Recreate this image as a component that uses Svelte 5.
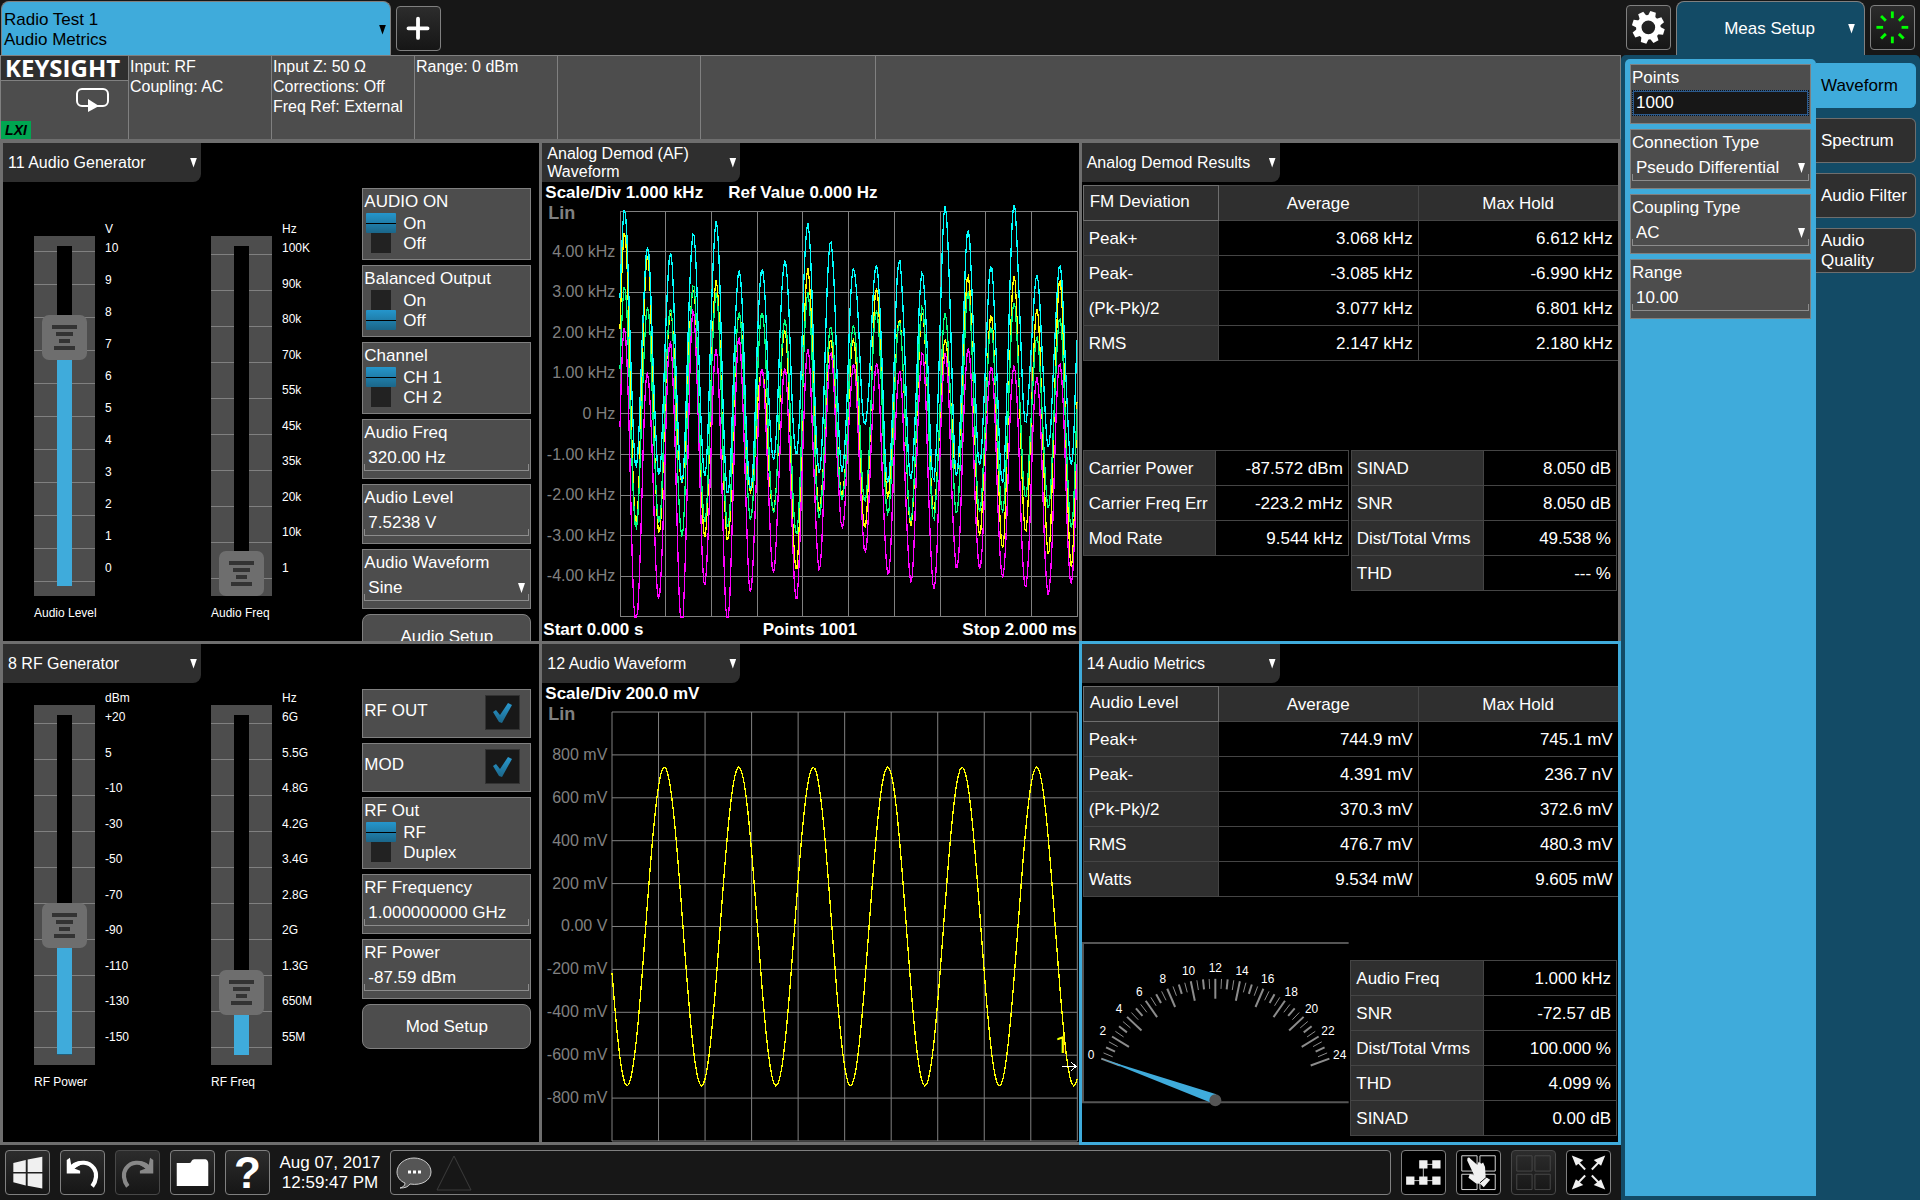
<script lang="ts">
  type Pair = [string, string];

  let audioLevel = $state(75);
  let audioFreq = $state(0);
  let rfPower = $state(37);
  let rfFreq = $state(16);

  const demodRows = [
    ["Peak+", "3.068 kHz", "6.612 kHz"],
    ["Peak-", "-3.085 kHz", "-6.990 kHz"],
    ["(Pk-Pk)/2", "3.077 kHz", "6.801 kHz"],
    ["RMS", "2.147 kHz", "2.180 kHz"],
  ];
  const carrier: Pair[] = [
    ["Carrier Power", "-87.572 dBm"],
    ["Carrier Freq Err", "-223.2 mHz"],
    ["Mod Rate", "9.544 kHz"],
  ];
  const demodQuality: Pair[] = [
    ["SINAD", "8.050 dB"],
    ["SNR", "8.050 dB"],
    ["Dist/Total Vrms", "49.538 %"],
    ["THD", "--- %"],
  ];
  const audioRows = [
    ["Peak+", "744.9 mV", "745.1 mV"],
    ["Peak-", "4.391 mV", "236.7 nV"],
    ["(Pk-Pk)/2", "370.3 mV", "372.6 mV"],
    ["RMS", "476.7 mV", "480.3 mV"],
    ["Watts", "9.534 mW", "9.605 mW"],
  ];
  const audioQuality: Pair[] = [
    ["Audio Freq", "1.000 kHz"],
    ["SNR", "-72.57 dB"],
    ["Dist/Total Vrms", "100.000 %"],
    ["THD", "4.099 %"],
    ["SINAD", "0.00 dB"],
  ];

  const demodScale = ["4.00 kHz", "3.00 kHz", "2.00 kHz", "1.00 kHz", "0 Hz", "-1.00 kHz", "-2.00 kHz", "-3.00 kHz", "-4.00 kHz"];
  const audioScale = ["800 mV", "600 mV", "400 mV", "200 mV", "0.00 V", "-200 mV", "-400 mV", "-600 mV", "-800 mV"];

  // Peak and trough of every cycle, in kHz
  const demodTraces = [
    {
      color: "#ffff00",
      high: [4.47, 3.9, 2.5, 3.1, 3.3, 2.52, 1.1, 2.09, 3.6, 1.84, 1.84, 3.1, 2.32, 2.5, 1.82, 3.4, 2.44, 3.4, 2.59, 3.3],
      low: [-2.7, -2.95, -1.7, -3.05, -3.15, -1.94, -2.4, -3.87, -2.4, -2.0, -2.82, -2.06, -2.75, -2.35, -1.5, -3.0, -3.3, -2.9, -3.45, -3.77],
    },
    {
      color: "#ff00ff",
      high: [2.15, 1.02, 1.8, 2.56, 1.6, 1.9, 1.12, 1.13, 1.6, 1.5, 1.22, 1.25, 1.06, 1.53, 1.5, 1.64, 1.2, 1.21, 0.91, 1.28],
      low: [-5.3, -4.57, -5.3, -4.22, -5.2, -4.38, -3.9, -4.57, -3.83, -2.8, -3.4, -3.96, -4.15, -4.33, -3.83, -3.83, -4.05, -4.3, -4.47, -4.2],
    },
    {
      color: "#00ff80",
      high: [3.13, 2.62, 2.6, 3.2, 2.97, 2.52, 2.54, 2.35, 3.0, 2.17, 2.19, 2.56, 2.27, 2.64, 2.48, 2.99, 2.13, 2.74, 1.88, 2.36],
      low: [-2.82, -2.68, -3.02, -2.66, -2.82, -2.62, -2.45, -3.0, -2.58, -2.13, -2.18, -2.48, -2.64, -2.6, -2.45, -2.41, -2.4, -2.04, -2.3, -2.8],
    },
    {
      color: "#00ffff",
      high: [5.02, 4.11, 3.97, 4.47, 4.75, 3.55, 3.6, 3.8, 4.7, 4.28, 3.6, 3.67, 3.8, 3.48, 5.12, 4.53, 3.65, 5.15, 3.4, 3.65],
      low: [-1.3, -1.51, -1.69, -1.54, -2.0, -1.87, -1.15, -1.03, -1.48, -1.43, -0.28, -1.72, -1.6, -1.64, -1.53, -1.26, -1.7, -0.21, -0.8, -1.26],
    },
  ];

  // Points are in a 1000 x 1000 plot, ten divisions each way
  function demodPath(high: number[], low: number[]) {
    const ends = [low[0]];
    high.forEach((h, i) => ends.push(h, low[i]));
    ends.push(high[0]);
    const half = 25.05;
    const start = -15.2;
    const pts = [];
    for (let x = 0; x <= 1000; x += 3) {
      const pos = (x - start) / half;
      const i = Math.min(Math.floor(pos), ends.length - 2);
      const t = (1 - Math.cos(Math.PI * (pos - i))) / 2;
      // a little ripple on the slopes
      const ripple = Math.sin(x * 0.37 + high[3] * 5) * 0.12 * Math.sin(Math.PI * (pos - i));
      const v = Math.max(-5, ends[i] + (ends[i + 1] - ends[i]) * t + ripple);
      pts.push(`${x},${(500 - v * 100).toFixed(1)}`);
    }
    return pts.join(" ");
  }

  function sinePath() {
    const pts = [];
    for (let x = 0; x <= 1000; x += 4) {
      const v = 0.743 * Math.cos((2 * Math.PI * (x - 112.5)) / 160);
      pts.push(`${x},${(500 - v * 500).toFixed(1)}`);
    }
    return pts.join(" ");
  }

  const lines = Array.from({ length: 11 }, (_, i) => i * 100);

  function polar(r: number, value: number) {
    const a = ((160 - (value * 140) / 24) * Math.PI) / 180;
    return { x: 134 + r * Math.cos(a), y: 159 - r * Math.sin(a) };
  }

  const ticks = Array.from({ length: 49 }, (_, i) => {
    const value = i / 2;
    const major = i % 4 === 0;
    return {
      a: polar(major ? 102 : 112, value),
      b: polar(122, value),
      width: i % 2 === 0 ? 2 : 1,
    };
  });
  const numbers = Array.from({ length: 13 }, (_, i) => ({ text: i * 2, ...polar(133, i * 2) }));
</script>

{#snippet tab(title: string)}
  <button class="panel-tab"><span>{title}</span><i class="caret"></i></button>
{/snippet}

{#snippet scale(unit: string, labels: string[])}
  <div class="scale">
    <span class="unit">{unit}</span>
    <div class="marks">
      {#each labels as label}<span>{label}</span>{/each}
    </div>
  </div>
{/snippet}

{#snippet toggle(title: string, options: string[], selected: number)}
  <fieldset class="box toggle">
    <legend>{title}</legend>
    {#each options as option, i}
      <label><input type="radio" name={title} value={option} checked={i === selected} />{option}</label>
    {/each}
  </fieldset>
{/snippet}

{#snippet field(label: string, value: string, focused = false)}
  <label class="box field"><span>{label}</span><input type="text" class:focused {value} /></label>
{/snippet}

{#snippet dropdown(label: string, value: string)}
  <label class="box field"><span>{label}</span><select><option>{value}</option></select></label>
{/snippet}

{#snippet check(label: string)}
  <label class="box check"><span>{label}</span><input type="checkbox" checked /></label>
{/snippet}

{#snippet gridLines()}
  {#each lines as p}
    <line x1={p} y1="0" x2={p} y2="1000" />
    <line x1="0" y1={p} x2="1000" y2={p} />
  {/each}
{/snippet}

{#snippet results(title: string, rows: string[][])}
  <table class="results">
    <thead>
      <tr><th class="corner" scope="col">{title}</th><th scope="col">Average</th><th scope="col">Max Hold</th></tr>
    </thead>
    <tbody>
      {#each rows as [name, avg, max]}
        <tr><th scope="row">{name}</th><td>{avg}</td><td>{max}</td></tr>
      {/each}
    </tbody>
  </table>
{/snippet}

{#snippet pairs(rows: Pair[])}
  <table class="pairs">
    <tbody>
      {#each rows as [name, value]}
        <tr><th scope="row">{name}</th><td>{value}</td></tr>
      {/each}
    </tbody>
  </table>
{/snippet}

<div class="app">
  <div class="main">
    <header class="top">
      <button class="mode-tab"><span>Radio Test 1<br />Audio Metrics</span><i class="caret dark"></i></button>
      <button class="tool" aria-label="Add screen">
        <svg viewBox="0 0 135 135"><path d="M66 37v60M36 67h60" stroke="#fff" stroke-width="12" stroke-linecap="round" /></svg>
      </button>
    </header>

    <div class="status">
      <div class="brand">
        <div class="logo">KEYSIGHT</div>
        <svg class="sweep" viewBox="0 0 36 24" width="36" height="24">
          <path d="M13 18H7a5 5 0 0 1-5-5V6a5 5 0 0 1 5-5h21a5 5 0 0 1 5 5v7a5 5 0 0 1-5 5h-6" fill="none" stroke="#fff" stroke-width="2" />
          <path d="M13 11v13l11-6z" fill="#fff" />
        </svg>
        <span class="lxi">LXI</span>
      </div>
      <div class="cell">Input: RF<br />Coupling: AC</div>
      <div class="cell">Input Z: 50 Ω<br />Corrections: Off<br />Freq Ref: External</div>
      <div class="cell">Range: 0 dBm</div>
      <div class="cell"></div>
      <div class="cell wide"></div>
      <div class="cell rest"></div>
    </div>

    <main class="panels">
      <section class="panel low-sliders">
        {@render tab("11 Audio Generator")}
        <div class="generator">
          <div class="slider">
            <input type="range" class="eleven" id="audio-level" step="any" bind:value={audioLevel} style="--value: {audioLevel}" />
            {@render scale("V", ["10", "9", "8", "7", "6", "5", "4", "3", "2", "1", "0"])}
            <label for="audio-level">Audio Level</label>
          </div>
          <div class="slider">
            <input type="range" id="audio-freq" step="any" bind:value={audioFreq} style="--value: {audioFreq}" />
            {@render scale("Hz", ["100K", "90k", "80k", "70k", "55k", "45k", "35k", "20k", "10k", "1"])}
            <label for="audio-freq">Audio Freq</label>
          </div>
          <div class="controls">
            {@render toggle("AUDIO ON", ["On", "Off"], 0)}
            {@render toggle("Balanced Output", ["On", "Off"], 1)}
            {@render toggle("Channel", ["CH 1", "CH 2"], 0)}
            {@render field("Audio Freq", "320.00 Hz")}
            {@render field("Audio Level", "7.5238 V")}
            {@render dropdown("Audio Waveform", "Sine")}
            <button class="setup">Audio Setup</button>
          </div>
        </div>
      </section>

      <section class="panel">
        {@render tab("Analog Demod (AF) Waveform")}
        <div class="chart-title"><b>Scale/Div 1.000 kHz</b><b>Ref Value 0.000 Hz</b></div>
        <div class="chart">
          <b class="lin">Lin</b>
          <div class="axis wide-axis">
            {#each demodScale as label}<span>{label}</span>{/each}
          </div>
          <div class="plot">
            <svg viewBox="0 0 1000 1000" preserveAspectRatio="none">
              {@render gridLines()}
              {#each demodTraces as trace}
                <polyline points={demodPath(trace.high, trace.low)} stroke={trace.color} />
              {/each}
            </svg>
          </div>
        </div>
        <div class="chart-foot"><b>Start 0.000 s</b><b>Points 1001</b><b>Stop 2.000 ms</b></div>
      </section>

      <section class="panel">
        {@render tab("Analog Demod Results")}
        {@render results("FM Deviation", demodRows)}
        <div class="lower demod-lower">
          {@render pairs(carrier)}
          {@render pairs(demodQuality)}
        </div>
      </section>

      <section class="panel">
        {@render tab("8 RF Generator")}
        <div class="generator">
          <div class="slider">
            <input type="range" id="rf-power" step="any" bind:value={rfPower} style="--value: {rfPower}" />
            {@render scale("dBm", ["+20", "5", "-10", "-30", "-50", "-70", "-90", "-110", "-130", "-150"])}
            <label for="rf-power">RF Power</label>
          </div>
          <div class="slider">
            <input type="range" id="rf-freq" step="any" bind:value={rfFreq} style="--value: {rfFreq}" />
            {@render scale("Hz", ["6G", "5.5G", "4.8G", "4.2G", "3.4G", "2.8G", "2G", "1.3G", "650M", "55M"])}
            <label for="rf-freq">RF Freq</label>
          </div>
          <div class="controls">
            {@render check("RF OUT")}
            {@render check("MOD")}
            {@render toggle("RF Out", ["RF", "Duplex"], 0)}
            {@render field("RF Frequency", "1.000000000 GHz")}
            {@render field("RF Power", "-87.59 dBm")}
            <button class="setup">Mod Setup</button>
          </div>
        </div>
      </section>

      <section class="panel">
        {@render tab("12 Audio Waveform")}
        <div class="chart-title"><b>Scale/Div 200.0 mV</b></div>
        <div class="chart no-foot">
          <b class="lin">Lin</b>
          <div class="axis">
            {#each audioScale as label}<span>{label}</span>{/each}
          </div>
          <div class="plot">
            <svg viewBox="0 0 1000 1000" preserveAspectRatio="none">
              {@render gridLines()}
              <polyline points={sinePath()} stroke="#ffff00" />
            </svg>
            <span class="trace-number">1</span>
            <svg class="trace-arrow" viewBox="0 0 15 11"><path d="M0 5.500h14M9 1l5 4.500-5 4.500" fill="none" stroke="#fff" /></svg>
          </div>
        </div>
      </section>

      <section class="panel active">
        {@render tab("14 Audio Metrics")}
        {@render results("Audio Level", audioRows)}
        <div class="lower metrics-lower">
          <svg class="meter" viewBox="0 0 268 162">
            <path d="M268 1H1V161H268" fill="none" stroke="#555" stroke-width="2" />
            {#each ticks as t}
              <line x1={t.a.x} y1={t.a.y} x2={t.b.x} y2={t.b.y} stroke="#8c8c8c" stroke-width={t.width} />
            {/each}
            {#each numbers as n}
              <text x={n.x} y={n.y + 4}>{n.text}</text>
            {/each}
            <path d="M19 117 131 162 135 153z" fill="#3fabdb" />
            <circle cx="134" cy="159" r="6" fill="#555" />
          </svg>
          {@render pairs(audioQuality)}
        </div>
      </section>
    </main>

    <footer class="bottom">
      <button class="tool" aria-label="Windows">
        <svg viewBox="0 0 135 135" fill="#f0f0f0"><path d="M23 38 62 28V66H23zM68 27 114 18V66H68zM23 71H62V108L23 98zM68 71H114V118L68 109z" /></svg>
      </button>
      <button class="tool" aria-label="Undo">
        <svg viewBox="0 0 135 135"><path d="M18 28 28 21 32 43Q50 28 70 32L60 44 42 55 60 62V71H18z" fill="#fff" /><path d="M38 50C58 30 88 34 103 54C114 70 112 93 98 111" fill="none" stroke="#fff" stroke-width="13" /></svg>
      </button>
      <button class="tool disabled" aria-label="Redo" disabled>
        <svg viewBox="0 0 135 135"><g transform="translate(135) scale(-1 1)"><path d="M18 28 28 21 32 43Q50 28 70 32L60 44 42 55 60 62V71H18z" fill="#888" /><path d="M38 50C58 30 88 34 103 54C114 70 112 93 98 111" fill="none" stroke="#888" stroke-width="13" /></g></svg>
      </button>
      <button class="tool" aria-label="Open">
        <svg viewBox="0 0 135 135"><path d="M18 110V38H58Q63 38 65 31 67 26 73 26H108Q117 28 117 40V110z" fill="#fff" /></svg>
      </button>
      <button class="tool help" aria-label="Help">?</button>
      <time class="clock">Aug 07, 2017<br />12:59:47 PM</time>
      <div class="messages">
        <svg viewBox="0 0 36 34" width="36" height="34">
          <path d="M18 2C9 2 1 8 1 16c0 5 3 9 8 11 0 3-2 4-5 5 5 0 8-1 10-4 12 2 21-4 21-12C35 8 27 2 18 2z" fill="#555" stroke="#ccc" />
          <path d="M12 16h3M17 16h3M22 16h3" stroke="#fff" stroke-width="3" />
        </svg>
        <svg viewBox="0 0 36 36" width="36" height="36"><path d="M18 1 35 35H1z" fill="none" stroke="#3c3c3c" /></svg>
      </div>
      <button class="tool black" aria-label="Block diagram">
        <svg viewBox="0 0 135 135"><path d="M26 93H108M67 93V42H108" fill="none" stroke="#ccc" stroke-width="3" /><path d="M13 80h26v26H13zM54 80h26v26H54zM95 80h26v26H95zM54 29h26v26H54zM95 29h26v26H95z" fill="#f0f0f0" /></svg>
      </button>
      <button class="tool black" aria-label="Select window">
        <svg viewBox="0 0 135 135"><path d="M15 15h48v48H15zM72 15h48v48H72zM15 73h48v48H15zM72 73h48v48H72z" fill="none" stroke="#ddd" stroke-width="3" /><path d="M33 22Q38 18 42 24L64 44 68 34 76 40 82 36 88 50 90 82 104 90 84 114 73 103 60 102 36 84 40 72 54 76 32 30z" fill="#f0f0f0" /><path d="M72 100 95 80" stroke="#000" stroke-width="3" /></svg>
      </button>
      <button class="tool disabled" aria-label="Window grid" disabled>
        <svg viewBox="0 0 135 135"><path d="M15 15h48v48H15zM72 15h48v48H72zM15 73h48v48H15zM72 73h48v48H72z" fill="none" stroke="#484848" stroke-width="3" /></svg>
      </button>
      <button class="tool black" aria-label="Full screen">
        <svg viewBox="0 0 135 135" fill="#f0f0f0" stroke="#f0f0f0">
          {#each ["", "translate(135) scale(-1 1)", "translate(0 135) scale(1 -1)", "translate(135 135) scale(-1 -1)"] as transform}
            <g {transform}><path d="M15 14 51 28 28 46z" stroke="none" /><path d="M36 36 57 58" stroke-width="6" /></g>
          {/each}
        </svg>
      </button>
    </footer>
  </div>

  <aside class="side">
    <div class="side-top">
      <button class="tool" aria-label="System settings">
        <svg viewBox="0 0 135 135">
          <circle cx="67" cy="67" r="30" fill="none" stroke="#fff" stroke-width="17" />
          {#each [17, 62, 107, 152, 197, 242, 287, 332] as angle}
            <path d="M55 33 58 16H76L79 33z" fill="#fff" transform="rotate({angle} 67 67)" />
          {/each}
        </svg>
      </button>
      <button class="menu-tab"><span>Meas Setup</span><i class="caret"></i></button>
      <button class="tool" aria-label="Sweep running">
        <svg viewBox="0 0 135 135" stroke="#00ff00" stroke-width="9">
          {#each [0, 45, 90, 135, 180, 225, 270, 315] as angle}
            <path d="M67 17V38" transform="rotate({angle} 67 67)" />
          {/each}
        </svg>
      </button>
    </div>
    <div class="side-body">
      <div class="menu">
        {@render field("Points", "1000", true)}
        {@render dropdown("Connection Type", "Pseudo Differential")}
        {@render dropdown("Coupling Type", "AC")}
        {@render field("Range", "10.00")}
      </div>
      <nav class="menu-tabs">
        <button class="selected">Waveform</button>
        <button>Spectrum</button>
        <button>Audio Filter</button>
        <button>Audio Quality</button>
      </nav>
    </div>
  </aside>
</div>

<style>
  :global(body) {
    margin: 0;
    background: #171717;
  }

  .app {
    display: flex;
    height: 100vh;
    overflow: hidden;
    font-family: "Liberation Sans", Arial, sans-serif;
    font-size: 17px;
    line-height: 20px;
    color: #fff;
    background: #171717;
  }

  .app * {
    box-sizing: border-box;
  }

  button,
  input,
  select {
    font: inherit;
    color: inherit;
    margin: 0;
  }

  .main {
    flex: 1;
    min-width: 0;
    display: flex;
    flex-direction: column;
  }

  .caret {
    flex: none;
    width: 7px;
    height: 10px;
    background: #fff;
    clip-path: polygon(0 0, 100% 0, 50% 100%);
  }

  .caret.dark {
    background: #000;
  }

  .tool {
    flex: none;
    width: 45px;
    height: 45px;
    padding: 0;
    border: 1px solid #808080;
    border-radius: 4px;
    background: linear-gradient(#2c2c2c, #161616);
  }

  .tool svg {
    display: block;
    width: 100%;
    height: 100%;
  }

  .tool.black {
    background: #000;
  }

  .tool.disabled {
    border-color: #484848;
  }

  .tool.help {
    font-size: 44px;
    font-weight: bold;
    line-height: 42px;
  }

  /* top bar */
  .top {
    display: flex;
    align-items: flex-end;
    gap: 5px;
    height: 55px;
    padding-left: 1px;
  }

  .top .tool {
    margin-bottom: 4px;
  }

  .mode-tab {
    display: flex;
    align-items: center;
    justify-content: space-between;
    width: 390px;
    height: 54px;
    padding: 2px 4px 0 2px;
    border: 1px solid #808080;
    border-bottom: 0;
    border-radius: 8px 8px 0 0;
    background: #3fabdb;
    color: #000;
    text-align: left;
  }

  .status {
    display: flex;
    flex: none;
    height: 84px;
    border: 1px solid #808080;
    border-width: 1px 0 0 1px;
    background: #4d4d4d;
    font-size: 16px;
  }

  .brand {
    position: relative;
    width: 128px;
    border-right: 1px solid #808080;
  }

  .logo {
    height: 25px;
    border-bottom: 1px solid #808080;
    padding-left: 4px;
    background: #2f2f2f;
    font-family: "Open Sans", sans-serif;
    font-size: 24px;
    font-weight: 700;
    line-height: 24px;
  }

  .sweep {
    position: absolute;
    right: 17px;
    top: 32px;
  }

  .lxi {
    position: absolute;
    left: 0;
    bottom: 0;
    width: 30px;
    height: 18px;
    background: #00a651;
    color: #000;
    font-size: 14px;
    font-weight: bold;
    font-style: italic;
    line-height: 18px;
    text-align: center;
  }

  .cell {
    width: 143px;
    padding: 1px;
    border-right: 1px solid #808080;
    white-space: nowrap;
  }

  .cell.wide {
    width: 175px;
  }

  .cell.rest {
    flex: 1;
  }

  /* panels */
  .panels {
    flex: 1;
    min-height: 0;
    display: grid;
    grid-template-columns: repeat(3, minmax(0, 1fr));
    grid-template-rows: repeat(2, minmax(0, 1fr));
    gap: 3px;
    padding: 4px 3px 3px;
    background: #6e6e6e;
  }

  .panel {
    display: flex;
    flex-direction: column;
    overflow: hidden;
    background: #000;
  }

  .panel.active {
    box-shadow: 0 0 0 3px #3fabdb;
  }

  .panel-tab {
    flex: none;
    display: flex;
    align-items: center;
    justify-content: space-between;
    width: 198px;
    height: 39px;
    padding: 0 4px 0 5px;
    border: 0;
    border-radius: 0 0 8px 0;
    background: #2f2f2f;
    font-size: 16px;
    line-height: 18px;
    text-align: left;
  }

  .panel-tab span {
    max-width: 175px;
  }

  .generator {
    display: flex;
    min-height: 0;
    padding: 0 8px 0 31px;
  }

  .slider {
    flex: none;
    display: grid;
    grid-template-columns: 61px 1fr;
    grid-template-rows: 374px 14px;
    row-gap: 10px;
    align-content: start;
    width: 177px;
    padding-top: 8px;
    font-size: 12px;
    line-height: 14px;
  }

  .slider + .slider {
    width: 141px;
  }

  .low-sliders .slider {
    padding-top: 40px;
  }

  .slider input {
    --pitch: 36px;
    appearance: none;
    writing-mode: vertical-lr;
    direction: rtl;
    align-self: end;
    width: 61px;
    height: 360px;
    background:
      linear-gradient(#3fabdb, #3fabdb) 50% calc(100% - 10px) / 15px calc(var(--value) * 315px / 100 + 12px) no-repeat,
      linear-gradient(#000, #000) 50% 50% / 15px 340px no-repeat,
      repeating-linear-gradient(transparent 0 calc(var(--pitch) - 1px), #808080 calc(var(--pitch) - 1px) var(--pitch)) 0 -17px / 100% 400px,
      #4d4d4d;
  }

  .slider input.eleven {
    --pitch: 33px;
  }

  .slider input::-webkit-slider-thumb {
    appearance: none;
    width: 45px;
    height: 45px;
    border-radius: 7px;
    background:
      linear-gradient(#333, #333) 50% 10px / 25px 4px no-repeat,
      linear-gradient(#333, #333) 50% 17px / 17px 4px no-repeat,
      linear-gradient(#333, #333) 50% 24px / 11px 4px no-repeat,
      linear-gradient(#333, #333) 50% 31px / 21px 4px no-repeat,
      #6e6e6e;
  }

  .scale {
    display: flex;
    flex-direction: column;
    gap: 5px;
    padding-left: 10px;
  }

  .marks {
    display: flex;
    flex-direction: column;
    justify-content: space-between;
    height: 334px;
  }

  .slider label {
    grid-column: 1 / 3;
  }

  .controls {
    flex: none;
    display: flex;
    flex-direction: column;
    gap: 5px;
    width: 169px;
    margin-left: auto;
    padding-top: 6px;
  }

  .box {
    display: block;
    flex: none;
    margin: 0;
    padding: 3px 1px 0;
    border: 1px solid #808080;
    background: #4d4d4d;
  }

  .toggle {
    height: 72px;
    min-width: 0;
  }

  .toggle legend {
    float: left;
    width: 100%;
    height: 21px;
    padding: 0;
  }

  .toggle label {
    clear: both;
    display: flex;
    height: 20px;
    line-height: 21px;
  }

  .toggle input {
    appearance: none;
    width: 20px;
    height: 20px;
    margin: 0 12px 0 7px;
    background: #222;
  }

  .toggle input:checked {
    width: 30px;
    margin: 0 7px 0 2px;
    border-radius: 1px;
    background: linear-gradient(transparent 10px, #000 10px 11px, transparent 11px), linear-gradient(#2596cc, #1b6689);
  }

  .field {
    height: 60px;
  }

  .field span {
    display: block;
    height: 22px;
  }

  .field input,
  .field select {
    display: block;
    appearance: none;
    width: 100%;
    height: 26px;
    padding: 0 4px;
    border: 0;
    border-radius: 0;
    outline: 0;
    background:
      linear-gradient(#8c8c8c, #8c8c8c) 0 100% / 100% 1px no-repeat,
      linear-gradient(#8c8c8c, #8c8c8c) 0 100% / 1px 7px no-repeat,
      linear-gradient(#8c8c8c, #8c8c8c) 100% 100% / 1px 7px no-repeat;
  }

  .field select {
    background:
      linear-gradient(#8c8c8c, #8c8c8c) 0 100% / 100% 1px no-repeat,
      linear-gradient(#8c8c8c, #8c8c8c) 0 100% / 1px 7px no-repeat,
      linear-gradient(#8c8c8c, #8c8c8c) 100% 100% / 1px 7px no-repeat,
      url("data:image/svg+xml,%3Csvg xmlns='http://www.w3.org/2000/svg' viewBox='0 0 7 10'%3E%3Cpath d='M0 0h7L3.500 10z' fill='%23fff'/%3E%3C/svg%3E") calc(100% - 4px) 8px / 7px 10px no-repeat;
  }

  .field input.focused {
    border: 2px solid #2c5a8c;
    outline: 1px dotted #111;
    outline-offset: -1px;
    padding: 0 2px;
    background: #171717;
  }

  .check {
    display: flex;
    justify-content: space-between;
    height: 49px;
    padding: 5px 10px 0 1px;
  }

  .check span {
    line-height: 31px;
  }

  .check input {
    appearance: none;
    width: 35px;
    height: 35px;
    border: 1px solid #333;
    background: #181818 url("data:image/svg+xml,%3Csvg xmlns='http://www.w3.org/2000/svg' viewBox='0 0 20 20'%3E%3ClinearGradient id='g' x2='0' y2='1'%3E%3Cstop stop-color='%232a9ad0'/%3E%3Cstop offset='1' stop-color='%231b6689'/%3E%3C/linearGradient%3E%3Cpath d='M0 9 3 7 7 12 15 0 19 2 9 20 6 19z' fill='url(%23g)'/%3E%3C/svg%3E") center / 20px 20px no-repeat;
  }

  .setup {
    flex: none;
    height: 45px;
    padding: 0;
    border: 1px solid #808080;
    border-radius: 8px;
    background: #4d4d4d;
  }

  /* charts */
  .chart-title {
    flex: none;
    display: flex;
    gap: 25px;
    height: 21px;
    padding: 1px 0 0 3px;
  }

  .chart {
    position: relative;
    flex: 1;
    min-height: 0;
    display: flex;
    padding-top: 8px;
  }

  .chart.no-foot {
    padding-bottom: 1px;
  }

  .lin {
    position: absolute;
    left: 6px;
    top: 0;
    font-size: 18px;
    color: #808080;
  }

  .axis {
    display: grid;
    grid-template-rows: 1fr repeat(9, 2fr) 1fr;
    width: 70px;
    padding-right: 5px;
    font-size: 16px;
    text-align: right;
    color: #808080;
  }

  .axis::before {
    content: "";
  }

  .axis.wide-axis {
    width: 78px;
  }

  .axis span {
    align-self: center;
  }

  .plot {
    position: relative;
    flex: 1;
    min-width: 0;
    margin-right: 1px;
  }

  .plot svg {
    display: block;
    width: 100%;
    height: 100%;
    overflow: visible;
    fill: none;
    shape-rendering: crispEdges;
  }

  .plot line {
    stroke: #808080;
    vector-effect: non-scaling-stroke;
  }

  .plot polyline {
    stroke-width: 1.3;
    vector-effect: non-scaling-stroke;
  }

  .trace-number {
    position: absolute;
    right: 9px;
    bottom: 86px;
    font-family: Roboto, sans-serif;
    font-size: 24px;
    color: #ff0;
  }

  .plot .trace-arrow {
    position: absolute;
    right: 1px;
    bottom: 69px;
    width: 15px;
    height: 11px;
  }

  .chart-foot {
    flex: none;
    display: grid;
    grid-template-columns: 1fr auto 1fr;
    height: 24px;
    padding: 3px 2px 0 1px;
  }

  .chart-foot b:last-child {
    text-align: right;
  }

  /* tables */
  table {
    border-collapse: collapse;
    table-layout: fixed;
  }

  th,
  td {
    height: 35px;
    padding: 1px 5px 0;
    border: 1px solid #454545;
    font-weight: normal;
    text-align: right;
    white-space: nowrap;
  }

  th {
    background: #2f2f2f;
    text-align: left;
  }

  .results {
    flex: none;
    width: calc(100% - 2px);
    margin: 3px 1px 0;
  }

  .results thead th {
    width: 200px;
    text-align: center;
  }

  .results thead th.corner {
    width: 135px;
    padding: 0 5px 3px 6px;
    border: 1px double #6e6e6e;
    text-align: left;
  }

  .lower {
    display: grid;
    grid-template-columns: minmax(0, 1fr) minmax(0, 1fr);
    align-items: start;
    gap: 2px;
    padding: 0 1px;
  }

  .demod-lower {
    margin-top: 89px;
  }

  .metrics-lower {
    margin-top: 45px;
    padding-left: 0;
  }

  .metrics-lower .pairs {
    margin-top: 18px;
  }

  .pairs {
    width: 100%;
  }

  .pairs th {
    width: 50%;
  }

  .meter {
    display: block;
    width: 100%;
    overflow: visible;
    font-size: 12px;
  }

  .meter text {
    fill: #fff;
    text-anchor: middle;
  }

  /* bottom bar */
  .bottom {
    flex: none;
    display: flex;
    align-items: center;
    gap: 10px;
    height: 55px;
    padding: 0 10px 0 5px;
  }

  .clock {
    width: 120px;
    margin: 0 -10px;
    text-align: center;
  }

  .messages {
    flex: 1;
    display: flex;
    align-items: center;
    gap: 4px;
    height: 45px;
    padding-left: 5px;
    border: 1px solid #808080;
    border-radius: 4px;
  }

  /* menu on the right */
  .side {
    flex: none;
    display: flex;
    flex-direction: column;
    width: 299px;
  }

  .side-top {
    display: flex;
    align-items: flex-end;
    gap: 5px;
    height: 55px;
    padding: 0 5px;
  }

  .side-top .tool {
    margin-bottom: 5px;
  }

  .menu-tab {
    flex: 1;
    display: flex;
    align-items: center;
    height: 54px;
    padding: 0 9px;
    border: 1px solid #808080;
    border-bottom: 0;
    border-radius: 8px 8px 0 0;
    background: #134b66;
  }

  .menu-tab span {
    flex: 1;
    padding-left: 5px;
  }

  .side-body {
    flex: 1;
    display: flex;
    padding: 4px;
    border-radius: 5px 5px 0 0;
    background: #134b66;
  }

  .menu {
    display: flex;
    flex-direction: column;
    gap: 5px;
    width: 191px;
    padding: 5px;
    border-radius: 5px 5px 0 0;
    background: #3fabdb;
  }

  .menu-tabs {
    flex: 1;
    display: flex;
    flex-direction: column;
    gap: 10px;
    padding-top: 4px;
  }

  .menu-tabs button {
    height: 45px;
    padding: 0 0 0 5px;
    border: 1px solid #6e6e6e;
    border-left: 0;
    border-radius: 0 6px 6px 0;
    background: #2f2f2f;
    text-align: left;
  }

  .menu-tabs .selected {
    border-color: #3fabdb;
    background: #3fabdb;
    color: #000;
  }
</style>
